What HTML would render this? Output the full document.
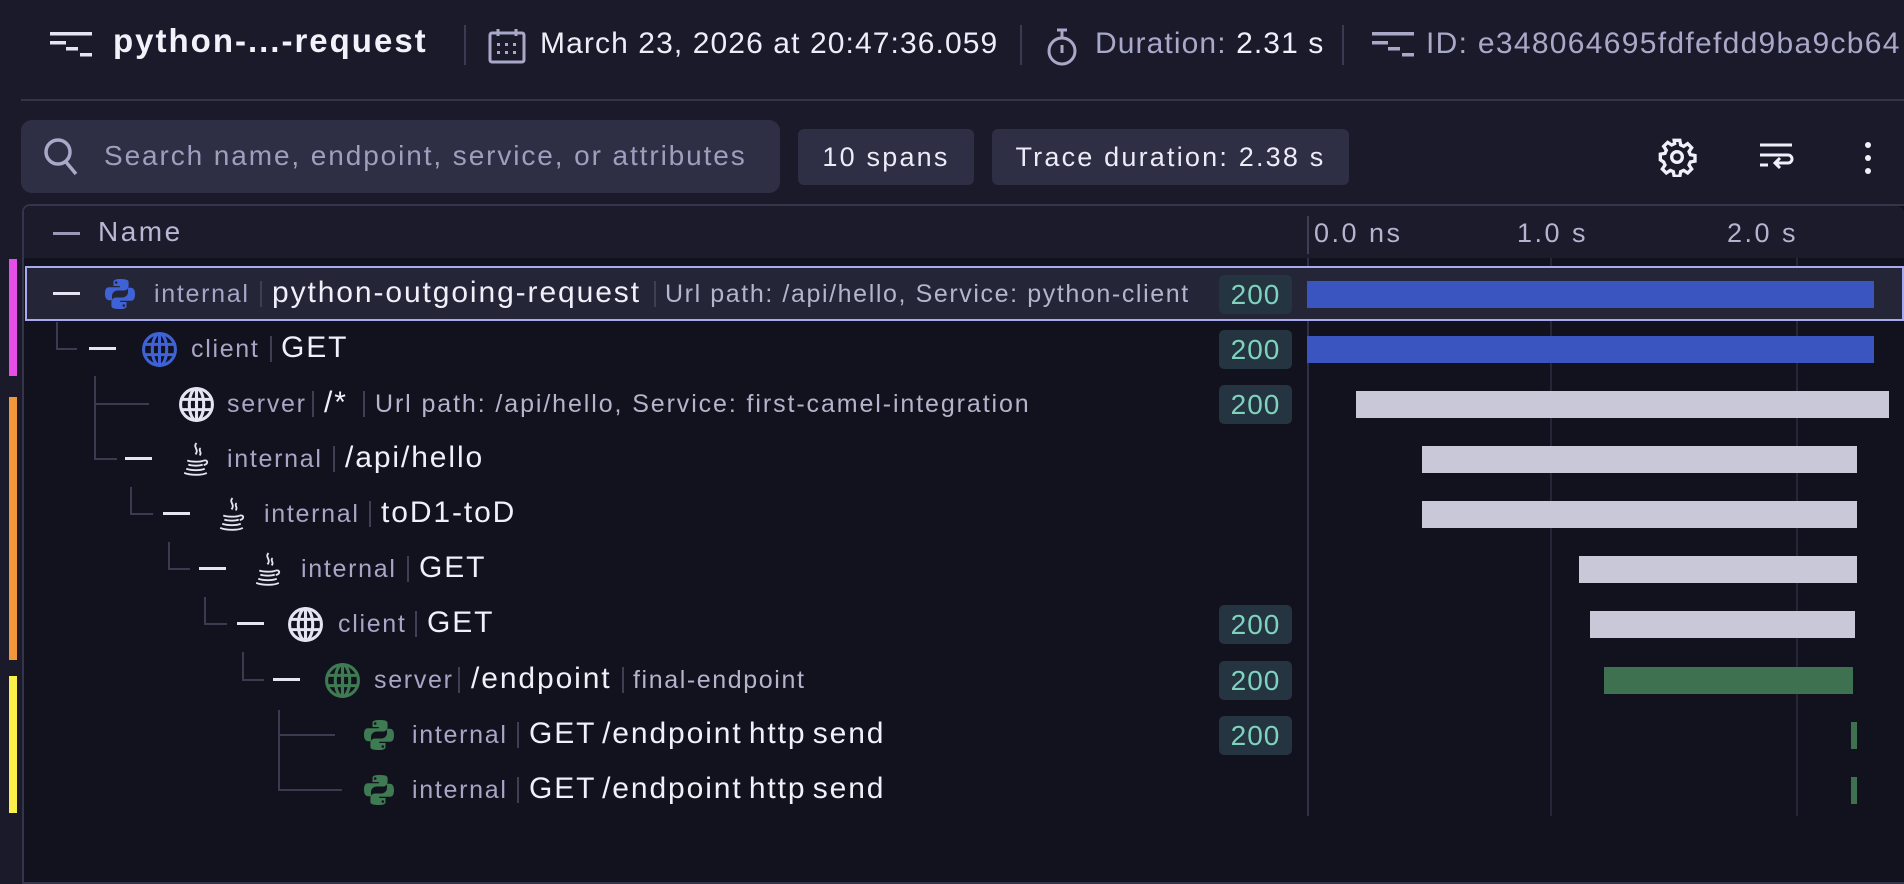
<!DOCTYPE html>
<html><head><meta charset="utf-8"><style>
*{margin:0;padding:0;box-sizing:border-box}
body{width:1904px;height:858px;background:#1a1a2b;font-family:"Liberation Sans",sans-serif;position:relative;overflow:hidden;color:#e8e8f6}
.a{position:absolute;white-space:nowrap}
.t{position:absolute;white-space:nowrap;line-height:40px;height:40px}
.k{font-size:25px;color:#a6a6c6;letter-spacing:1.7px}
.n{font-size:30px;color:#f0f0fa;letter-spacing:1.9px;word-spacing:-4px}
.at{font-size:25px;color:#b4b4cc;letter-spacing:1.6px}
.sep{position:absolute;width:2px;height:26px;background:#3e3e54}
.dash{position:absolute;width:27px;height:3px;background:#e4e4f2}
.ln{position:absolute;background:#3a3a50}
.bar{position:absolute;height:27px}
.badge{position:absolute;left:1219px;width:73px;height:39px;border-radius:5px;background:#243440;color:#7fd2bd;font-size:28px;text-align:center;line-height:39px;letter-spacing:1px}
.chip{position:absolute;background:#2e2f44;border-radius:6px;font-size:27px;color:#ececf8;line-height:56px;text-align:center;letter-spacing:2.2px}
</style></head><body>
<!-- header -->
<svg class="a" style="left:50px;top:30px" width="42" height="28" viewBox="0 0 42 28"><g fill="#e4e4f2"><rect x="0" y="2" width="42" height="3.5"/><rect x="0" y="11" width="16" height="3.5"/><rect x="16" y="17" width="12" height="3.5"/><rect x="30" y="23" width="12" height="3.5"/></g></svg>
<div class="a" style="left:113px;top:22px;font-size:33px;font-weight:bold;color:#f2f2fa;letter-spacing:2px">python-...-request</div>
<div class="a" style="left:464px;top:25px;width:2px;height:40px;background:#3a3a50"></div>
<svg class="a" style="left:488px;top:28px" width="38" height="36" viewBox="0 0 38 36"><g fill="none" stroke="#a8a8c8" stroke-width="3"><rect x="2" y="5" width="34" height="29" rx="2"/><line x1="10" y1="1" x2="10" y2="8"/><line x1="28" y1="1" x2="28" y2="8"/></g><g fill="#a8a8c8"><rect x="9" y="15" width="3" height="3"/><rect x="17" y="15" width="3" height="3"/><rect x="25" y="15" width="3" height="3"/><rect x="9" y="23" width="3" height="3"/><rect x="17" y="23" width="3" height="3"/><rect x="25" y="23" width="3" height="3"/></g></svg>
<div class="a" style="left:540px;top:27px;font-size:30px;color:#eeeef8;letter-spacing:1.1px">March 23, 2026 at 20:47:36.059</div>
<div class="a" style="left:1020px;top:25px;width:2px;height:40px;background:#3a3a50"></div>
<svg class="a" style="left:1046px;top:27px" width="32" height="40" viewBox="0 0 32 40"><g fill="none" stroke="#a8a8c8" stroke-width="3"><circle cx="16" cy="24" r="13"/><line x1="16" y1="18" x2="16" y2="26"/><line x1="11" y1="3" x2="21" y2="3"/><line x1="16" y1="3" x2="16" y2="10"/></g></svg>
<div class="a" style="left:1095px;top:27px;font-size:30px;color:#a8a8c8;letter-spacing:1.1px">Duration: <span style="color:#f0f0fa">2.31 s</span></div>
<div class="a" style="left:1342px;top:25px;width:2px;height:40px;background:#3a3a50"></div>
<svg class="a" style="left:1372px;top:30px" width="42" height="28" viewBox="0 0 42 28"><g fill="#a8a8c8"><rect x="0" y="2" width="42" height="3.5"/><rect x="0" y="11" width="16" height="3.5"/><rect x="16" y="17" width="12" height="3.5"/><rect x="30" y="23" width="12" height="3.5"/></g></svg>
<div class="a" style="left:1426px;top:27px;font-size:30px;color:#a8a8c8;letter-spacing:1.3px">ID: e348064695fdfefdd9ba9cb64</div>
<div class="a" style="left:21px;top:99px;width:1883px;height:2px;background:#34344a"></div>
<!-- toolbar -->
<div class="a" style="left:21px;top:120px;width:759px;height:73px;background:#2e2f44;border-radius:11px"></div>
<svg class="a" style="left:43px;top:137px" width="36" height="40" viewBox="0 0 36 40"><g fill="none" stroke="#a8a8c8" stroke-width="3.5"><circle cx="15" cy="15" r="12"/><line x1="23" y1="25" x2="33" y2="37"/></g></svg>
<div class="a" style="left:104px;top:140px;font-size:28px;color:#9e9ebe;letter-spacing:1.9px">Search name, endpoint, service, or attributes</div>
<div class="chip" style="left:798px;top:129px;width:176px">10 spans</div>
<div class="chip" style="left:992px;top:129px;width:357px">Trace duration: 2.38 s</div>
<svg class="a" style="left:1657px;top:137px" width="40" height="40" viewBox="0 0 24 24"><path fill="none" stroke="#f0f0fa" stroke-width="2" d="M10.3 2h3.4l.5 2.8 1.8.8 2.4-1.6 2.4 2.4-1.6 2.4.8 1.8 2.8.5v3.4l-2.8.5-.8 1.8 1.6 2.4-2.4 2.4-2.4-1.6-1.8.8-.5 2.8h-3.4l-.5-2.8-1.8-.8-2.4 1.6-2.4-2.4 1.6-2.4-.8-1.8L2 13.7v-3.4l2.8-.5.8-1.8L4 5.6 6.4 3.2l2.4 1.6 1.8-.8z"/><circle cx="12" cy="12" r="3.2" fill="none" stroke="#f0f0fa" stroke-width="2"/></svg>
<svg class="a" style="left:1758px;top:141px" width="36" height="36" viewBox="0 0 36 36"><g fill="none" stroke="#f0f0fa" stroke-width="3"><line x1="2" y1="4" x2="34" y2="4"/><path d="M2 14h28a4 4 0 0 1 0 8H18"/><path d="M22 17l-5 5 5 5"/><line x1="2" y1="24" x2="10" y2="24"/></g></svg>
<div class="a" style="left:1865px;top:142px;width:6px;height:6px;border-radius:3px;background:#f0f0fa"></div>
<div class="a" style="left:1865px;top:155px;width:6px;height:6px;border-radius:3px;background:#f0f0fa"></div>
<div class="a" style="left:1865px;top:168px;width:6px;height:6px;border-radius:3px;background:#f0f0fa"></div>
<!-- table -->
<div class="a" style="left:22px;top:204px;width:1890px;height:680px;border:2px solid #34344a;border-radius:8px 8px 0 0;background:#12121e"></div>
<div class="a" style="left:24px;top:206px;width:1880px;height:52px;background:#1b1b2c;border-radius:7px 7px 0 0"></div>
<div class="dash" style="left:53px;top:232px;background:#9a9ab8"></div>
<div class="a" style="left:98px;top:216px;font-size:28px;color:#b8b8d4;letter-spacing:2.5px">Name</div>
<div class="a" style="left:1307px;top:216px;width:2px;height:38px;background:#3e3e54"></div>
<div class="a" style="left:1314px;top:218px;font-size:27px;color:#b4b4d0;letter-spacing:2.5px">0.0 ns</div>
<div class="a" style="left:1517px;top:218px;font-size:27px;color:#b4b4d0;letter-spacing:2.5px">1.0 s</div>
<div class="a" style="left:1727px;top:218px;font-size:27px;color:#b4b4d0;letter-spacing:2.5px">2.0 s</div>
<!-- grid lines -->
<div class="a" style="left:1307px;top:258px;width:2px;height:558px;background:#30304a"></div>
<div class="a" style="left:1550px;top:258px;width:2px;height:558px;background:#262638"></div>
<div class="a" style="left:1796px;top:258px;width:2px;height:558px;background:#262638"></div>
<!-- left markers -->
<div class="a" style="left:9px;top:259px;width:8px;height:117px;background:#e64ee8"></div>
<div class="a" style="left:9px;top:397px;width:8px;height:263px;background:#f0973a"></div>
<div class="a" style="left:9px;top:676px;width:8px;height:137px;background:#fbf04a"></div>
<!-- selected row -->
<div class="a" style="left:25px;top:266px;width:1879px;height:55px;background:#252538;border:2px solid #a9a9f0"></div>

<svg width="0" height="0" style="position:absolute"><defs>
<g id="globe"><circle cx="18" cy="18" r="15.5" fill="none" stroke="currentColor" stroke-width="3"/><ellipse cx="18" cy="18" rx="7" ry="15.5" fill="none" stroke="currentColor" stroke-width="3"/><line x1="2.5" y1="13" x2="33.5" y2="13" stroke="currentColor" stroke-width="3"/><line x1="2.5" y1="23" x2="33.5" y2="23" stroke="currentColor" stroke-width="3"/><line x1="18" y1="2.5" x2="18" y2="33.5" stroke="currentColor" stroke-width="3"/></g>
<g id="py"><path fill="currentColor" d="M15.5 1C9 1 9.5 3.8 9.5 3.8V8h6.3v1.3H5C1.8 9.3 1 12.2 1 16c0 3.8 1.4 6.2 4.3 6.2H8v-4.2c0-3.2 2.8-5.5 5.8-5.5h6.3c2.6 0 4.5-2 4.5-4.5V4.3C24.6 1.8 22 1 15.5 1zm-3.3 2.2a1.3 1.3 0 1 1 0 2.6 1.3 1.3 0 0 1 0-2.6z"/><path fill="currentColor" d="M16.5 31c6.5 0 6-2.8 6-2.8V24h-6.3v-1.3H27c3.2 0 4-2.9 4-6.7 0-3.8-1.4-6.2-4.3-6.2H24v4.2c0 3.2-2.8 5.5-5.8 5.5h-6.3c-2.6 0-4.5 2-4.5 4.5v3.7C7.4 30.2 10 31 16.5 31zm3.3-2.2a1.3 1.3 0 1 1 0-2.6 1.3 1.3 0 0 1 0 2.6z"/></g>
<g id="java" fill="none" stroke="#e4e4f2" stroke-width="1.8"><path d="M14 2c-4 4 3 6-1 11"/><path d="M18 7c-3 2 2 4-1 7"/><path d="M5 19c4 1.5 13 1.5 16 0"/><path d="M6 23c4 1.3 11 1.3 14 0"/><path d="M4 27c5 1.8 14 1.8 18 0"/><path d="M21 19c4-1 5 3 0 4.5"/><path d="M2 31c6 2.5 18 2.5 22 0"/></g>
</defs></svg>

<!-- Row 1 -->
<div class="dash" style="left:53px;top:292px"></div>
<svg class="a" style="left:104px;top:278px;color:#3f63d6" width="32" height="32" viewBox="0 0 32 32"><use href="#py"/></svg>
<div class="t k" style="left:154px;top:274px">internal</div>
<div class="sep" style="left:260px;top:281px"></div>
<div class="t n" style="left:272px;top:273px">python-outgoing-request</div>
<div class="sep" style="left:654px;top:281px"></div>
<div class="t at" style="left:665px;top:274px">Url path: /api/hello, Service: python-client</div>
<div class="badge" style="top:275px">200</div>
<div class="bar" style="left:1307px;width:567px;top:281px;background:#3a54c0"></div>
<!-- Row 2 -->
<div class="ln" style="left:56px;top:322px;width:2px;height:28px"></div>
<div class="ln" style="left:56px;top:348px;width:21px;height:2px"></div>
<div class="dash" style="left:89px;top:347px"></div>
<svg class="a" style="left:141px;top:331px;color:#3f63d6" width="37" height="37" viewBox="0 0 36 36"><use href="#globe"/></svg>
<div class="t k" style="left:191px;top:329px">client</div>
<div class="sep" style="left:270px;top:336px"></div>
<div class="t n" style="left:281px;top:328px">GET</div>
<div class="badge" style="top:330px">200</div>
<div class="bar" style="left:1307px;width:567px;top:336px;background:#3a54c0"></div>
<!-- Row 3 -->
<div class="ln" style="left:94px;top:376px;width:2px;height:84px"></div>
<div class="ln" style="left:94px;top:403px;width:55px;height:2px"></div>
<svg class="a" style="left:178px;top:386px;color:#e4e4f2" width="37" height="37" viewBox="0 0 36 36"><use href="#globe"/></svg>
<div class="t k" style="left:227px;top:384px">server</div>
<div class="sep" style="left:312px;top:391px"></div>
<div class="t n" style="left:324px;top:383px">/*</div>
<div class="sep" style="left:363px;top:391px"></div>
<div class="t at" style="left:375px;top:384px;letter-spacing:1.9px">Url path: /api/hello, Service: first-camel-integration</div>
<div class="badge" style="top:385px">200</div>
<div class="bar" style="left:1356px;width:533px;top:391px;background:#c8c8d8"></div>
<!-- Row 4 -->
<div class="ln" style="left:94px;top:458px;width:23px;height:2px"></div>
<div class="dash" style="left:125px;top:457px"></div>
<svg class="a" style="left:182px;top:441px" width="27" height="36" viewBox="0 0 26 35"><use href="#java"/></svg>
<div class="t k" style="left:227px;top:439px">internal</div>
<div class="sep" style="left:333px;top:446px"></div>
<div class="t n" style="left:345px;top:438px">/api/hello</div>
<div class="bar" style="left:1422px;width:435px;top:446px;background:#c8c8d8"></div>
<!-- Row 5 -->
<div class="ln" style="left:130px;top:487px;width:2px;height:28px"></div>
<div class="ln" style="left:130px;top:513px;width:23px;height:2px"></div>
<div class="dash" style="left:163px;top:512px"></div>
<svg class="a" style="left:218px;top:496px" width="27" height="36" viewBox="0 0 26 35"><use href="#java"/></svg>
<div class="t k" style="left:264px;top:494px">internal</div>
<div class="sep" style="left:369px;top:501px"></div>
<div class="t n" style="left:381px;top:493px">toD1-toD</div>
<div class="bar" style="left:1422px;width:435px;top:501px;background:#c8c8d8"></div>
<!-- Row 6 -->
<div class="ln" style="left:168px;top:542px;width:2px;height:28px"></div>
<div class="ln" style="left:168px;top:568px;width:22px;height:2px"></div>
<div class="dash" style="left:199px;top:567px"></div>
<svg class="a" style="left:254px;top:551px" width="27" height="36" viewBox="0 0 26 35"><use href="#java"/></svg>
<div class="t k" style="left:301px;top:549px">internal</div>
<div class="sep" style="left:407px;top:556px"></div>
<div class="t n" style="left:419px;top:548px">GET</div>
<div class="bar" style="left:1579px;width:278px;top:556px;background:#c8c8d8"></div>
<!-- Row 7 -->
<div class="ln" style="left:204px;top:597px;width:2px;height:28px"></div>
<div class="ln" style="left:204px;top:623px;width:23px;height:2px"></div>
<div class="dash" style="left:237px;top:622px"></div>
<svg class="a" style="left:287px;top:606px;color:#e4e4f2" width="37" height="37" viewBox="0 0 36 36"><use href="#globe"/></svg>
<div class="t k" style="left:338px;top:604px">client</div>
<div class="sep" style="left:415px;top:611px"></div>
<div class="t n" style="left:427px;top:603px">GET</div>
<div class="badge" style="top:605px">200</div>
<div class="bar" style="left:1590px;width:265px;top:611px;background:#c8c8d8"></div>
<!-- Row 8 -->
<div class="ln" style="left:242px;top:652px;width:2px;height:29px"></div>
<div class="ln" style="left:242px;top:679px;width:22px;height:2px"></div>
<div class="dash" style="left:273px;top:678px"></div>
<svg class="a" style="left:324px;top:662px;color:#3e7a52" width="37" height="37" viewBox="0 0 36 36"><use href="#globe"/></svg>
<div class="t k" style="left:374px;top:660px">server</div>
<div class="sep" style="left:458px;top:667px"></div>
<div class="t n" style="left:471px;top:659px">/endpoint</div>
<div class="sep" style="left:622px;top:667px"></div>
<div class="t at" style="left:633px;top:660px">final-endpoint</div>
<div class="badge" style="top:661px">200</div>
<div class="bar" style="left:1604px;width:249px;top:667px;background:#3e7150"></div>
<!-- Row 9 -->
<div class="ln" style="left:278px;top:710px;width:2px;height:81px"></div>
<div class="ln" style="left:278px;top:734px;width:57px;height:2px"></div>
<svg class="a" style="left:363px;top:719px;color:#3e7a52" width="32" height="32" viewBox="0 0 32 32"><use href="#py"/></svg>
<div class="t k" style="left:412px;top:715px">internal</div>
<div class="sep" style="left:517px;top:722px"></div>
<div class="t n" style="left:529px;top:714px">GET /endpoint http send</div>
<div class="badge" style="top:716px">200</div>
<div class="bar" style="left:1851px;width:6px;top:722px;background:#3e7150"></div>
<!-- Row 10 -->
<div class="ln" style="left:278px;top:789px;width:64px;height:2px"></div>
<svg class="a" style="left:363px;top:774px;color:#3e7a52" width="32" height="32" viewBox="0 0 32 32"><use href="#py"/></svg>
<div class="t k" style="left:412px;top:770px">internal</div>
<div class="sep" style="left:517px;top:777px"></div>
<div class="t n" style="left:529px;top:769px">GET /endpoint http send</div>
<div class="bar" style="left:1851px;width:6px;top:777px;background:#3e7150"></div>
</body></html>
